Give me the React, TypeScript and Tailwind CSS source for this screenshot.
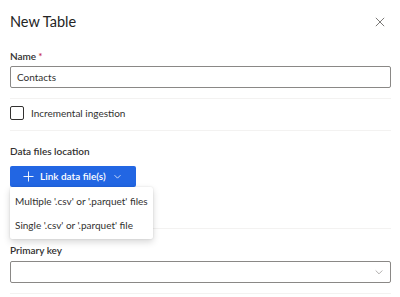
import { useState } from 'react'

const font = { fontFamily: 'Lato, "Noto Sans", sans-serif' }

function Chevron({ className }: { className?: string }) {
  return (
    <svg viewBox="0 0 12 12" className={className} fill="none" stroke="currentColor" strokeWidth="1">
      <path d="M2 4.2 6 8.2 10 4.2" />
    </svg>
  )
}

export default function App() {
  const [name] = useState('Contacts')

  return (
    <div className="h-[297px] w-[400px] overflow-hidden bg-white text-[#323130]" style={font}>
      <div className="pl-[10px] pr-[9px]">
        {/* header */}
        <div className="flex h-[44px] items-center justify-between">
          <h2 className="text-[14.5px] leading-none text-[#242424]">New Table</h2>
          <svg viewBox="0 0 12 12" className="mr-[6px] h-[10px] w-[10px] text-[#605e5c]" stroke="currentColor" strokeWidth="1">
            <path d="M1 1 11 11M11 1 1 11" />
          </svg>
        </div>

        {/* name */}
        <div className="mt-[6px] flex h-[12px] items-center text-[10px] font-semibold leading-[12px]">
          Name <span className="ml-[2px] text-[#c4314b]">*</span>
        </div>
        <div className="mt-[4px] flex h-[22px] items-center rounded-[2px] border border-[#8a8886] px-[6px] text-[10px]">
          {name}
        </div>
        <div className="mt-[10px] h-px bg-[#f3f2f1]" />

        {/* checkbox */}
        <div className="mt-[7px] mb-[10px] flex h-[14px] items-center gap-[7px]">
          <div className="h-[14px] w-[14px] rounded-[2px] border border-[#323130]" />
          <span className="text-[10px]">Incremental ingestion</span>
        </div>
        <div className="h-px bg-[#f3f2f1]" />

        {/* data files */}
        <div className="mt-[14px] h-[12px] text-[10px] font-semibold leading-[12px]">Data files location</div>
        <div className="relative mt-[9px]">
          <button className="flex h-[21px] w-[126px] items-center gap-[6px] rounded-[2px] bg-[#2266e3] pl-[13px] text-[10px] font-semibold text-white">
            <svg viewBox="0 0 12 12" className="h-[11px] w-[11px]" stroke="currentColor" strokeWidth="1">
              <path d="M6 0.5v11M0.5 6h11" />
            </svg>
            <span>Link data file(s)</span>
            <Chevron className="ml-[1px] h-[9px] w-[9px]" />
          </button>
          <div className="absolute left-0 top-[21px] z-10 w-[143px] rounded-[2px] bg-white py-[2px] text-[10px] whitespace-nowrap shadow-[0_3px_7px_rgba(0,0,0,0.16),0_0_2px_rgba(0,0,0,0.12)]">
            <div className="flex h-[24px] items-center px-[5px]">Multiple '.csv' or '.parquet' files</div>
            <div className="flex h-[24px] items-center px-[5px]">Single '.csv' or '.parquet' file</div>
          </div>
        </div>
        <div className="mt-[41px] h-px bg-[#f3f2f1]" />

        {/* primary key */}
        <div className="mt-[15px] h-[12px] text-[10px] font-semibold leading-[12px]">Primary key</div>
        <div className="mt-[5px] flex h-[22px] items-center justify-end rounded-[2px] border border-[#8a8886] pr-[6px]">
          <Chevron className="h-[10px] w-[10px] text-[#a19f9d]" />
        </div>
        <div className="mt-[10px] h-px bg-[#f3f2f1]" />
      </div>
    </div>
  )
}
